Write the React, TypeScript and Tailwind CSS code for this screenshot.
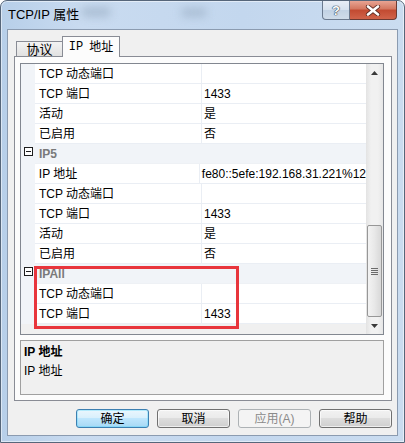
const F = "font-['Liberation_Sans','Noto_Sans_CJK_SC',sans-serif]"

type Row = { kind: 'prop'; name: string; value?: string } | { kind: 'cat'; name: string }

const rows: Row[] = [
  { kind: 'prop', name: 'TCP 动态端口' },
  { kind: 'prop', name: 'TCP 端口', value: '1433' },
  { kind: 'prop', name: '活动', value: '是' },
  { kind: 'prop', name: '已启用', value: '否' },
  { kind: 'cat', name: 'IP5' },
  { kind: 'prop', name: 'IP 地址', value: 'fe80::5efe:192.168.31.221%12' },
  { kind: 'prop', name: 'TCP 动态端口' },
  { kind: 'prop', name: 'TCP 端口', value: '1433' },
  { kind: 'prop', name: '活动', value: '是' },
  { kind: 'prop', name: '已启用', value: '否' },
  { kind: 'cat', name: 'IPAll' },
  { kind: 'prop', name: 'TCP 动态端口' },
  { kind: 'prop', name: 'TCP 端口', value: '1433' },
]

const GridRow = ({ row }: { row: Row }) => {
  if (row.kind === 'cat') {
    return (
      <div className="flex h-[20px]">
        <div className="w-[14px] bg-[#f1f4f8] flex justify-center pt-[3px] pl-[1px]">
          <div className="w-[9px] h-[9px] border border-[#1e1e1e] bg-white flex items-center justify-center">
            <div className="w-[5px] h-px bg-[#1e1e1e]" />
          </div>
        </div>
        <div className="flex-1 bg-[#f1f4f8] border-b border-[#eef1f5] flex items-center pl-[4px] font-bold text-[#7a7a7a]">
          {row.name}
        </div>
      </div>
    )
  }
  return (
    <div className="flex h-[20px]">
      <div className="w-[14px] bg-[#f1f4f8]" />
      <div className="w-[166px] border-b border-[#eaeef4] flex items-center pl-[4px] text-black">{row.name}</div>
      <div className="flex-1 border-b border-l border-[#eaeef4] flex items-center pl-[2px] text-black">{row.value}</div>
    </div>
  )
}

const Btn = ({ label, variant }: { label: string; variant?: 'default' | 'disabled' }) => {
  const base = 'w-[73px] h-[19px] rounded-[3px] flex items-center justify-center text-[12px] border'
  if (variant === 'disabled')
    return <div className={`${base} border-[#adb2b5] bg-[#f4f4f4] text-[#8a8a8a]`}>{label}</div>
  if (variant === 'default')
    return (
      <div className={`${base} border-[#3c7fb1] bg-[linear-gradient(#eaf6fd_0%,#d9f0fc_45%,#bee6fd_50%,#a7d9f5_100%)] shadow-[inset_0_0_0_1px_#48d5fb55] text-black`}>
        {label}
      </div>
    )
  return (
    <div className={`${base} border-[#707070] bg-[linear-gradient(#f2f2f2_0%,#ebebeb_45%,#dddddd_50%,#cfcfcf_100%)] shadow-[inset_0_0_0_1px_#ffffffaa] text-black`}>
      {label}
    </div>
  )
}

export default function App() {
  return (
    <div className={`${F} w-[405px] h-[443px] flex flex-col border border-[#56667a] rounded-t-[7px] overflow-hidden bg-[linear-gradient(90deg,#b7cfe9_0%,#c9dbf0_20%,#c3d7ee_60%,#cadcf0_100%)] shadow-[inset_0_0_0_1px_#ffffff80]`}>
      <div className="h-[28px] flex items-start relative shrink-0">
        <div className="absolute left-[80px] top-[6px] w-[30px] h-[10px] rounded-full bg-[#9fb3c9] blur-[4px] opacity-70" />
        <div className="absolute left-[180px] top-[7px] w-[26px] h-[9px] rounded-full bg-[#9fb3c9] blur-[4px] opacity-70" />
        <div className="relative pl-[7px] pt-[6px] text-[13px] text-black leading-[16px] flex-1">TCP/IP 属性</div>
        <div className="relative flex mr-[7px]">
          <div className="w-[28px] h-[19px] border border-t-0 border-[#6b7a8f] rounded-bl-[4px] bg-[linear-gradient(#e8eef6_0%,#d6e1ee_50%,#c2d2e4_51%,#cfdcea_100%)] flex items-center justify-center">
            <span className="text-[13px] font-bold text-white leading-none [text-shadow:0_0_1px_#2c3e55,0_0_1px_#2c3e55,0_0_1px_#2c3e55]">?</span>
          </div>
          <div className="w-[47px] h-[19px] border border-t-0 border-l-0 border-[#6b3a33] rounded-br-[4px] bg-[linear-gradient(#e8a493_0%,#d3765f_45%,#c24a31_50%,#d0634a_100%)] flex items-center justify-center">
            <svg width="16" height="11" viewBox="0 0 16 11">
              <path d="M3 1.5 L13 9.5 M13 1.5 L3 9.5" stroke="#5a2a22" strokeWidth="4.2" strokeLinecap="round" />
              <path d="M3 1.5 L13 9.5 M13 1.5 L3 9.5" stroke="#ffffff" strokeWidth="2.6" strokeLinecap="round" />
            </svg>
          </div>
        </div>
      </div>

      <div className="mx-[6px] mb-[6px] flex-1 bg-[#f0f0f0] border border-[#8b9bb0] flex flex-col px-[6px] pt-[6px] text-[12px]">
        <div className="flex items-start h-[21px] pl-[2px] -mb-px relative z-10">
          <div className="mt-[5px] w-[47px] h-[15px] border border-b-0 border-[#898c95] bg-[linear-gradient(#f3f3f3,#e1e1e1)] flex items-center justify-center text-[13px] leading-none">
            协议
          </div>
          <div className="-ml-px w-[58px] h-[21px] border border-b-0 border-[#898c95] bg-[#fcfcfc] flex items-center justify-center text-[12px] pb-[1px]">
            <span className="font-['Liberation_Mono','Noto_Sans_CJK_SC',monospace]">IP</span>
            <span className="ml-[6px]">地址</span>
          </div>
        </div>

        <div className="h-[345px] mr-[-1px] border border-[#898c95] bg-[#fcfcfc] pl-[5px] pt-[6px] flex flex-col">
          <div className="w-[364px] h-[272px] border border-[#828790] bg-[#f0f0f0] flex relative">
            <div className="w-[345px] flex flex-col bg-white">
              {rows.map((r, i) => (
                <GridRow key={i} row={r} />
              ))}
              <div className="flex-1 bg-[#f0f0f0]" />
            </div>
            <div className="w-[17px] bg-[linear-gradient(90deg,#e3e3e3,#f1f1f1_30%,#f1f1f1_70%,#e6e6e6)] flex flex-col">
              <div className="h-[17px] flex items-center justify-center pt-[1px]">
                <svg width="7" height="4" viewBox="0 0 7 4"><path d="M0 4 L3.5 0 L7 4 Z" fill="#3a3a3a" /></svg>
              </div>
              <div className="flex-1 relative">
                <div className="absolute left-[1px] right-[1px] top-[144px] h-[92px] rounded-[2px] border border-[#979797] bg-[linear-gradient(90deg,#f3f3f3,#e8e8e8_50%,#d8d8d8)] flex flex-col items-center justify-center gap-[1px]">
                  <div className="w-[7px] h-px bg-[#6b6b6b]" />
                  <div className="w-[7px] h-px bg-[#6b6b6b]" />
                  <div className="w-[7px] h-px bg-[#6b6b6b]" />
                  <div className="w-[7px] h-px bg-[#6b6b6b]" />
                </div>
              </div>
              <div className="h-[17px] flex items-center justify-center">
                <svg width="7" height="4" viewBox="0 0 7 4"><path d="M0 0 L3.5 4 L7 0 Z" fill="#3a3a3a" /></svg>
              </div>
            </div>
            <div className="absolute left-[13px] top-[202px] w-[205px] h-[63px] border-[3px] border-[#e8353c]" />
          </div>

          <div className="mt-[5px] w-[364px] h-[55px] border border-[#a0a0a0] bg-[#f0f0f0] pl-[3px] pt-[3px] flex flex-col">
            <div className="font-bold leading-[16px]">IP 地址</div>
            <div className="leading-[16px] mt-[3px]">IP 地址</div>
          </div>
        </div>

        <div className="mt-[8px] mr-[-1px] flex justify-end gap-[8px]">
          <Btn label="确定" variant="default" />
          <Btn label="取消" />
          <Btn label="应用(A)" variant="disabled" />
          <Btn label="帮助" />
        </div>
      </div>
    </div>
  )
}
